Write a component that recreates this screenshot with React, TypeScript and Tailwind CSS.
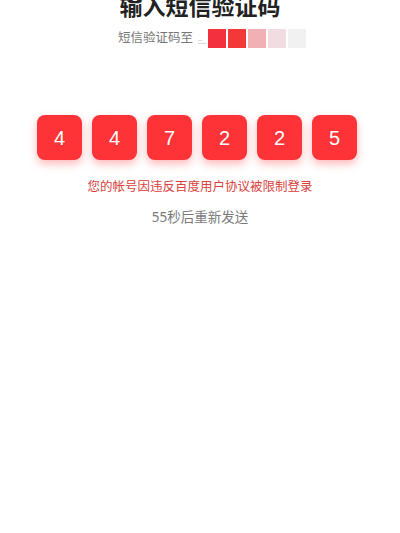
import React from 'react';

const digits = ['4', '4', '7', '2', '2', '5'];

// masked phone number blocks
const blocks = ['bg-[#f2303e]', 'bg-[#f33838]', 'bg-[#f1b0b4]', 'bg-[#f1dde1]', 'bg-[#f1f1f1]'];

export default function App() {
  return (
    <div
      className="relative h-[533px] w-[400px] overflow-hidden bg-white"
      style={{ fontFamily: '"Noto Sans", "Noto Sans CJK SC", sans-serif' }}
    >
      <div className="flex flex-col items-center">
        <h1 className="-mt-[9px] text-[23px] font-bold leading-[30px] text-[#222]">输入短信验证码</h1>
        <div className="mt-[7px] flex items-center pl-[24px]">
          <span className="text-[12.5px] leading-[20px] text-[#777]">短信验证码至</span>
          <div className="ml-[5px] mt-[8px] flex flex-col text-[2.5px] leading-[3px] text-[#777]">
            <span>xxx</span>
            <span>xxxxxx</span>
          </div>
          <div className="ml-[2px] flex gap-[2px]">
            {blocks.map((c, i) => (
              <div key={i} className={`h-[19px] w-[18px] ${c}`} />
            ))}
          </div>
        </div>
        <div className="mt-[67px] flex gap-[10px] pr-[6px]">
          {digits.map((d, i) => (
            <div
              key={i}
              className="flex h-[45px] w-[45px] items-center justify-center rounded-[8px] bg-[#fd3338] text-[20px] font-light text-white shadow-[0_4px_8px_rgba(253,51,56,0.35)]"
              style={{ fontFamily: '"Liberation Sans", Arial, sans-serif' }}
            >
              {d}
            </div>
          ))}
        </div>
        <p className="mt-[18px] text-[12.5px] leading-[18px] text-[#d8413c]">您的帐号因违反百度用户协议被限制登录</p>
        <p className="mt-[11px] text-[13.5px] leading-[20px] text-[#7a7a7a]">55秒后重新发送</p>
      </div>
    </div>
  );
}
